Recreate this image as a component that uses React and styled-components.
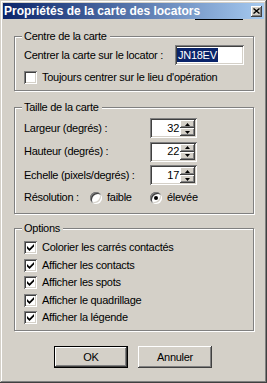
import React from "react";
import styled, { createGlobalStyle } from "styled-components";

const GlobalStyle = createGlobalStyle`
  html, body {
    margin: 0;
    padding: 0;
    background: #d4d0c8;
  }
  body {
    font-family: "Liberation Sans", Arial, sans-serif;
    font-size: 11px;
    line-height: 13px;
    letter-spacing: -0.27px;
    color: #000;
  }
`;

const raised = "inset -1px -1px #404040, inset 1px 1px #fff, inset -2px -2px #808080, inset 2px 2px #d4d0c8";
const sunken = "inset 1px 1px #808080, inset -1px -1px #fff, inset 2px 2px #404040, inset -2px -2px #d4d0c8";

const Window = styled.div`
  position: relative;
  box-sizing: border-box;
  width: 267px;
  height: 383px;
  padding: 3px;
  background: #d4d0c8;
  box-shadow: inset -1px -1px #404040, inset 1px 1px #d4d0c8, inset -2px -2px #808080, inset 2px 2px #fff;
  display: flex;
  flex-direction: column;
`;

const TitleBar = styled.div`
  height: 16px;
  display: flex;
  align-items: center;
  justify-content: space-between;
  padding: 0 2px 0 1px;
  background: linear-gradient(to right, #0a246a, #a6caf0);
`;

const Title = styled.span`
  color: #fff;
  font-weight: bold;
  font-size: 12px;
  line-height: 16px;
  letter-spacing: 0;
  white-space: nowrap;
`;

const CloseButton = styled.div`
  box-sizing: border-box;
  width: 11px;
  height: 11px;
  background: #d4d0c8;
  box-shadow: inset -1px -1px #404040, inset 1px 1px #fff, inset -2px -2px #808080;
  display: flex;
  align-items: center;
  justify-content: center;
  padding: 0 1px 1px 0;
`;

/* stray dark line under the caption, as in the capture */
const CaptionLine = styled.div`
  position: absolute;
  top: 19px;
  left: 195px;
  width: 48px;
  height: 1px;
  background: #000;
`;

const Body = styled.div`
  padding: 11px 10px 0 11px;
  display: flex;
  flex-direction: column;
`;

const Group = styled.fieldset`
  margin: ${(p) => p.$top}px 0 0 0;
  padding: ${(p) => p.$pad};
  min-width: 0;
  border: 1px solid #808080;
  box-shadow: inset 1px 1px #fff, 1px 1px #fff;
  display: flex;
  flex-direction: column;
  gap: ${(p) => p.$gap || 0}px;
`;

const Legend = styled.legend`
  padding: 0 3px 0 2px;
  margin-left: -2px;
  line-height: 13px;
  background: #d4d0c8;
`;

const Row = styled.div`
  display: flex;
  align-items: center;
  justify-content: space-between;
  margin-top: ${(p) => p.$mt || 0}px;
`;

const Label = styled.span`
  white-space: nowrap;
  width: ${(p) => (p.$w ? `${p.$w}px` : "auto")};
  flex: none;
`;

const Field = styled.div`
  box-sizing: border-box;
  width: ${(p) => p.$w}px;
  height: 20px;
  padding: 2px;
  background: #fff;
  box-shadow: ${sunken};
  display: flex;
  align-items: center;
`;

const Selected = styled.span`
  background: #0a246a;
  color: #fff;
  line-height: 14px;
  padding: 0 1px;
`;

const SpinValue = styled.span`
  flex: 1;
  text-align: right;
  padding-right: 1px;
`;

const SpinButtons = styled.div`
  display: flex;
  flex-direction: column;
  width: 15px;
  height: 16px;
`;

const SpinButton = styled.div`
  flex: 1;
  background: #d4d0c8;
  box-shadow: ${raised};
  display: flex;
  align-items: center;
  justify-content: center;
  padding-right: 1px;
`;

const Option = styled.span`
  display: flex;
  align-items: center;
  gap: 5px;
  width: ${(p) => (p.$w ? `${p.$w}px` : "auto")};
  white-space: nowrap;
`;

const RadioCircle = styled.span`
  flex: none;
  width: 12px;
  height: 12px;
  border-radius: 50%;
  background: #fff;
  box-shadow: ${sunken};
  display: flex;
  align-items: center;
  justify-content: center;
`;

const RadioDot = styled.span`
  width: 4px;
  height: 4px;
  border-radius: 50%;
  background: #000;
`;

const CheckBox = styled.span`
  flex: none;
  box-sizing: border-box;
  width: 13px;
  height: 13px;
  background: #fff;
  box-shadow: ${sunken};
  display: flex;
  align-items: center;
  justify-content: center;
`;

const CheckRow = styled.label`
  display: flex;
  align-items: center;
  gap: 5px;
  height: 13px;
  white-space: nowrap;
  margin-top: ${(p) => p.$mt || 0}px;
`;

const ButtonRow = styled.div`
  display: flex;
  gap: 10px;
  padding-left: 40px;
  margin-top: 15px;
`;

const Button = styled.button`
  box-sizing: border-box;
  width: 74px;
  height: 22px;
  padding: 0;
  border: 0;
  background: #d4d0c8;
  font: inherit;
  letter-spacing: inherit;
  color: #000;
  box-shadow: ${(p) =>
    p.$default
      ? "inset 0 0 0 1px #000, inset -2px -2px #404040, inset 2px 2px #fff, inset -3px -3px #808080"
      : raised};
`;

const Arrow = ({ up }) => (
  <svg width="5" height="3" viewBox="0 0 5 3">
    <polygon points={up ? "2.5,0 5,3 0,3" : "0,0 5,0 2.5,3"} fill="#000" />
  </svg>
);

const Spin = ({ value }) => (
  <Field $w={47}>
    <SpinValue>{value}</SpinValue>
    <SpinButtons>
      <SpinButton>
        <Arrow up />
      </SpinButton>
      <SpinButton>
        <Arrow />
      </SpinButton>
    </SpinButtons>
  </Field>
);

const Check = ({ checked, children, mt }) => (
  <CheckRow $mt={mt}>
    <CheckBox>
      {checked && (
        <svg width="7" height="7" viewBox="0 0 7 7">
          <polygon points="0,2 2.5,4.5 7,0 7,2.5 2.5,7 0,4.5" fill="#000" />
        </svg>
      )}
    </CheckBox>
    {children}
  </CheckRow>
);

const Radio = ({ checked, children, w }) => (
  <Option $w={w}>
    <RadioCircle>{checked && <RadioDot />}</RadioCircle>
    {children}
  </Option>
);

const sizes = [
  { label: "Largeur (degrés) :", value: 32 },
  { label: "Hauteur (degrés) :", value: 22 },
  { label: "Echelle (pixels/degrés) :", value: 17 },
];

const options = [
  "Colorier les carrés contactés",
  "Afficher les contacts",
  "Afficher les spots",
  "Afficher le quadrillage",
  "Afficher la légende",
];

export default function App() {
  return (
    <>
      <GlobalStyle />
      <Window>
        <TitleBar>
          <Title>Propriétés de la carte des locators</Title>
          <CloseButton>
            <svg width="7" height="6" viewBox="0 0 7 6">
              <path d="M0.5 0.5 L6.5 5.5 M6.5 0.5 L0.5 5.5" stroke="#000" strokeWidth="1.4" />
            </svg>
          </CloseButton>
        </TitleBar>
        <CaptionLine />
        <Body>
          <Group $top={0} $pad="2px 9px 6px 9px">
            <Legend>Centre de la carte</Legend>
            <Row>
              <Label>Centrer la carte sur le locator :</Label>
              <Field $w={69}>
                <Selected>JN18EV</Selected>
              </Field>
            </Row>
            <Check mt={6}>Toujours centrer sur le lieu d'opération</Check>
          </Group>

          <Group $top={10} $pad="4px 9px 9px 9px" $gap={3.5}>
            <Legend>Taille de la carte</Legend>
            {sizes.map((s) => (
              <Row key={s.label}>
                <Label $w={126}>{s.label}</Label>
                <Spin value={s.value} />
                <span style={{ flex: 1 }} />
              </Row>
            ))}
            <Row $mt={2.5}>
              <Label $w={66}>Résolution :</Label>
              <Radio w={60}>faible</Radio>
              <Radio checked>élevée</Radio>
              <span style={{ flex: 1 }} />
            </Row>
          </Group>

          <Group $top={8} $pad="6px 9px 6px 9px" $gap={4.5}>
            <Legend>Options</Legend>
            {options.map((o) => (
              <Check key={o} checked>
                {o}
              </Check>
            ))}
          </Group>

          <ButtonRow>
            <Button $default>OK</Button>
            <Button>Annuler</Button>
          </ButtonRow>
        </Body>
      </Window>
    </>
  );
}
